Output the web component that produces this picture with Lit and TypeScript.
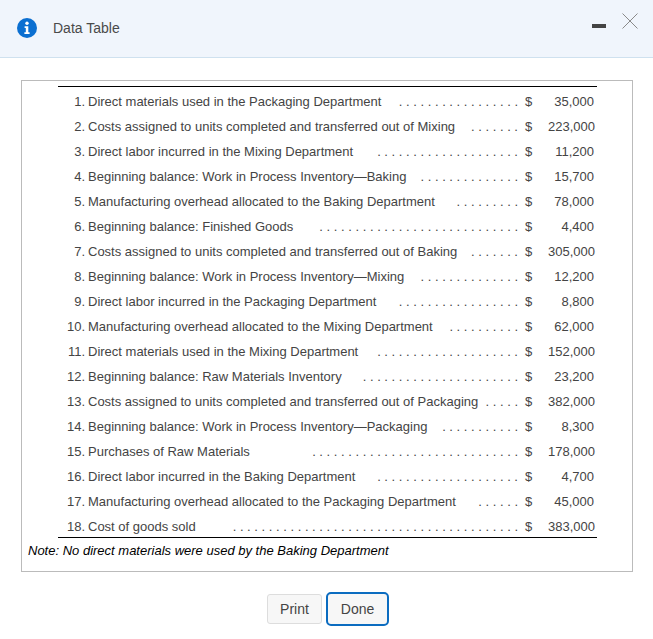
import { LitElement, html, css } from "lit";
import { customElement } from "lit/decorators.js";

// label, dot count, amount
const rows: [string, number, string][] = [
    ["Direct materials used in the Packaging Department", 17, "35,000"],
    ["Costs assigned to units completed and transferred out of Mixing", 7, "223,000"],
    ["Direct labor incurred in the Mixing Department", 20, "11,200"],
    ["Beginning balance: Work in Process Inventory—Baking", 14, "15,700"],
    ["Manufacturing overhead allocated to the Baking Department", 9, "78,000"],
    ["Beginning balance: Finished Goods", 28, "4,400"],
    ["Costs assigned to units completed and transferred out of Baking", 7, "305,000"],
    ["Beginning balance: Work in Process Inventory—Mixing", 14, "12,200"],
    ["Direct labor incurred in the Packaging Department", 17, "8,800"],
    ["Manufacturing overhead allocated to the Mixing Department", 10, "62,000"],
    ["Direct materials used in the Mixing Department", 20, "152,000"],
    ["Beginning balance: Raw Materials Inventory", 22, "23,200"],
    ["Costs assigned to units completed and transferred out of Packaging", 5, "382,000"],
    ["Beginning balance: Work in Process Inventory—Packaging", 11, "8,300"],
    ["Purchases of Raw Materials", 29, "178,000"],
    ["Direct labor incurred in the Baking Department", 20, "4,700"],
    ["Manufacturing overhead allocated to the Packaging Department", 6, "45,000"],
    ["Cost of goods sold", 40, "383,000"],
];

@customElement("app-root")
export class AppRoot extends LitElement {
    static styles = css`
        :host {
            display: block;
            width: 653px;
            height: 639px;
            background: #fff;
            font-family: "Liberation Sans", Arial, sans-serif;
            color: #444;
        }

        .header {
            display: flex;
            align-items: center;
            height: 56px;
            box-sizing: content-box;
            background: #f0f5fc;
            border-bottom: 1px solid #cfe1ef;
            padding: 0 0 1px 17px;
        }
        .info {
            width: 20px;
            height: 20px;
        }
        .title {
            margin-left: 16px;
            font-size: 14px;
            color: #4a4a4a;
        }
        .min {
            margin: 0 0 4px auto;
            width: 14px;
            height: 4px;
            background: #444;
        }
        .close {
            width: 16px;
            height: 16px;
            margin: 0 15px 15px 16px;
        }

        .box {
            margin: 22px 20px 0 21px;
            height: 485px;
            border: 1px solid #bbb;
            padding: 5px 6px 0;
        }
        .table {
            margin: 0 29px 0 30px;
            border-top: 1px solid #000;
            border-bottom: 1px solid #000;
            padding-top: 2px;
        }
        .row {
            display: flex;
            height: 25px;
            line-height: 25px;
            font-size: 13px;
            white-space: pre;
        }
        .row:last-child {
            height: 23px;
        }
        .num {
            width: 27px;
            text-align: right;
            flex: none;
        }
        .label {
            margin-left: 3px;
        }
        .dots {
            margin-left: auto;
        }
        .cur {
            flex: none;
            margin-left: 7px;
            width: 23px;
        }
        .amt {
            flex: none;
            width: 46px;
            margin-right: 3px;
            text-align: right;
        }
        .note {
            margin-top: 5px;
            font-size: 13px;
            font-style: italic;
            color: #000;
        }

        .footer {
            display: flex;
            justify-content: center;
            align-items: center;
            gap: 4px;
            margin-top: 20px;
            padding-left: 3px;
        }
        button {
            font: inherit;
            font-size: 14px;
            color: #444;
            background: #f7f7f7;
            padding: 0;
        }
        .print {
            width: 55px;
            height: 30px;
            border: 1px solid #ddd;
            border-radius: 3px;
        }
        .done {
            width: 63px;
            height: 34px;
            border: 2px solid #0b6cc0;
            border-radius: 5px;
        }
    `;

    render() {
        return html`
            <div class="header">
                <svg class="info" viewBox="0 0 20 20">
                    <circle cx="10" cy="10" r="10" fill="#0b6fd1"></circle>
                    <circle cx="10" cy="5.2" r="1.7" fill="#fff"></circle>
                    <path d="M7.6 8.2h3.7v6h1.3v1.8H7.4v-1.8h1.4V10H7.6z" fill="#fff"></path>
                </svg>
                <span class="title">Data Table</span>
                <div class="min"></div>
                <svg class="close" viewBox="0 0 16 16">
                    <path d="M.5.5l15 15M15.5.5l-15 15" stroke="#8a8a8a" stroke-width="1" fill="none"></path>
                </svg>
            </div>
            <div class="box">
                <div class="table">
                    ${rows.map(
                        ([label, dots, amt], i) => html`
                            <div class="row">
                                <span class="num">${i + 1}.</span>
                                <span class="label">${label}</span>
                                <span class="dots">${Array(dots).fill(".").join(" ")}</span>
                                <span class="cur">$</span>
                                <span class="amt">${amt}</span>
                            </div>
                        `
                    )}
                </div>
                <div class="note">Note: No direct materials were used by the Baking Department</div>
            </div>
            <div class="footer">
                <button class="print">Print</button>
                <button class="done">Done</button>
            </div>
        `;
    }
}
